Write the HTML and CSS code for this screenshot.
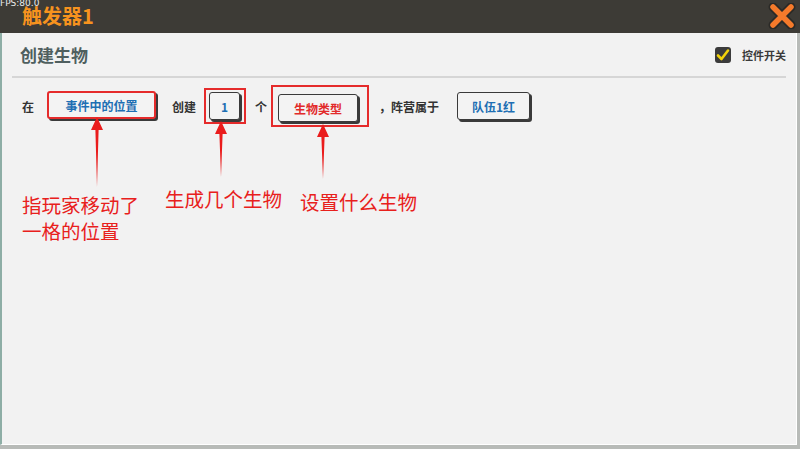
FILE: index.html
```html
<!DOCTYPE html>
<html lang="zh-CN">
<head>
  <meta charset="UTF-8" />
  <meta name="viewport" content="width=device-width, initial-scale=1" />
  <title>触发器1</title>
  <link rel="stylesheet" href="styles.css">
</head>
<body>
  <div class="topbar">
    <span class="fps">FPS:80.0</span>
    <h1>触发器1</h1>
    <svg class="close" width="28" height="26" viewBox="0 0 28 26">
      <path d="M5 4 L23 22 M23 4 L5 22" stroke="#2b2a27" stroke-width="9" stroke-linecap="round" />
      <path d="M5 4 L23 22 M23 4 L5 22" stroke="#f57a2b" stroke-width="5.5" stroke-linecap="round" />
    </svg>
  </div>

  <div class="panel">
    <div class="panel-head">
      <h2>创建生物</h2>
      <label class="toggle">
        <span class="check">
          <svg width="14" height="14" viewBox="0 0 14 14">
            <path d="M2 7.5 L5.5 11 L12 2.5" fill="none" stroke="#f2d20a" stroke-width="2.6" stroke-linejoin="round" stroke-linecap="round" />
          </svg>
        </span>
        控件开关
      </label>
    </div>

    <!-- 规则一行：在 [位置] 创建 [数量] 个 [生物] ，阵营属于 [队伍] -->
    <div class="rule-row">
      <span class="word">在</span>
      <button class="btn btn-pos hl">事件中的位置</button>
      <span class="word w-create">创建</span>
      <span class="mark mark-num"><button class="btn btn-num">1</button></span>
      <span class="word w-ge">个</span>
      <span class="mark mark-type"><button class="btn btn-type red">生物类型</button></span>
      <span class="word w-camp">，阵营属于</span>
      <button class="btn btn-team">队伍1红</button>
    </div>

    <div class="notes">
      <svg class="arrow a1" width="12" height="70" viewBox="0 0 12 70">
        <path d="M6 0 L12 13 L7.6 13 L6 70 L4.4 13 L0 13 Z" fill="#ea1c1c" />
      </svg>
      <svg class="arrow a2" width="12" height="56" viewBox="0 0 12 56">
        <path d="M6 0 L12 13 L7.6 13 L6 56 L4.4 13 L0 13 Z" fill="#ea1c1c" />
      </svg>
      <svg class="arrow a3" width="12" height="55" viewBox="0 0 12 55">
        <path d="M6 0 L12 13 L7.6 13 L6 55 L4.4 13 L0 13 Z" fill="#ea1c1c" />
      </svg>
      <p class="note n1">指玩家移动了<br>一格的位置</p>
      <p class="note n2">生成几个生物</p>
      <p class="note n3">设置什么生物</p>
    </div>
  </div>
</body>
</html>
```

FILE: styles.css
```css
body {
  margin: 0;
  width: 800px;
  height: 449px;
  overflow: hidden;
  background: #b8bbb8;
  font-family: "Noto Sans CJK SC", "Noto Sans", sans-serif;
}
.topbar {
  position: relative;
  height: 33px;
  background: #3d3b36;
  display: flex;
  align-items: center;
  justify-content: space-between;
  padding: 0 4px 0 22px;
  box-sizing: border-box;
}
.topbar h1 {
  margin: 0;
  font-size: 20px;
  font-weight: 700;
  color: #f7931e;
  line-height: 1;
  margin-top: -2px;
}
.fps {
  position: absolute;
  left: 0;
  top: -3px;
  font-family: "DejaVu Sans", sans-serif;
  font-size: 9px;
  line-height: 12px;
  color: #ececec;
}
.close {
  margin-top: -1px;
}
.panel {
  position: relative;
  width: 797px;
  height: 412px;
  background: #f2f2f2;
  border-left: 2px solid #8eaea6;
  border-right: 1px solid #ffffff;
  border-bottom: 1px solid #ffffff;
  box-sizing: border-box;
}
.panel-head {
  display: flex;
  align-items: center;
  justify-content: space-between;
  height: 45px;
  margin: 0 10px 0 10px;
  padding: 0 0 0 8px;
  border-bottom: 2px solid #d6d6d6;
  box-sizing: border-box;
}
.panel-head h2 {
  margin: 0;
  font-size: 17px;
  font-weight: 700;
  color: #4f5f5f;
}
.toggle {
  display: flex;
  align-items: center;
  gap: 11px;
  font-size: 11px;
  font-weight: 700;
  color: #3a3a3a;
}
.check {
  width: 16px;
  height: 16px;
  border-radius: 3px;
  background: #3b3b3b;
  display: flex;
  align-items: center;
  justify-content: center;
}
.rule-row {
  display: flex;
  align-items: center;
  height: 56px;
  padding-left: 20px;
}
.word {
  font-size: 12px;
  font-weight: 700;
  color: #333333;
}
.btn {
  font-family: inherit;
  font-size: 12px;
  font-weight: 700;
  color: #1e6fb3;
  height: 28px;
  background: #f3f3f3;
  border: 1px solid #3a3a3a;
  border-radius: 3px;
  box-shadow: 2px 2px 0 #3a3a3a;
  padding: 0;
  cursor: pointer;
}
.btn.hl {
  border: 2px solid #e52b2b;
}
.btn.red {
  color: #e22a2a;
}
.btn-pos {
  width: 109px;
  margin-left: 13px;
  margin-top: -2px;
}
.btn-num {
  width: 31px;
  display: block;
}
.btn-type {
  width: 80px;
  display: block;
}
.btn-team {
  width: 73px;
  margin-left: 18px;
}
.mark {
  border: 2px solid #e52b2b;
  box-sizing: border-box;
}
.mark-num {
  margin-left: 8px;
  padding: 2px 4px 2px 3px;
}
.mark-type {
  margin-left: 4px;
  padding: 7px 9px 3px 5px;
}
.w-create {
  margin-left: 16px;
}
.w-ge {
  margin-left: 9px;
}
.w-camp {
  margin-left: 10px;
}
.notes {
  position: relative;
}
.arrow {
  position: absolute;
}
.a1 { left: 89px; top: -17px; }
.a2 { left: 213px; top: -13px; }
.a3 { left: 315px; top: -10px; }
.note {
  position: absolute;
  margin: 0;
  font-size: 19.5px;
  line-height: 26px;
  color: #e8201c;
}
.n1 { left: 20px; top: 58px; }
.n2 { left: 163px; top: 52px; }
.n3 { left: 298px; top: 55px; }
```
